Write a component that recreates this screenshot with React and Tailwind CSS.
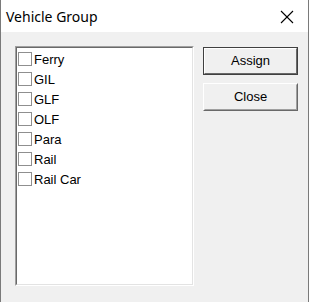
export default function App() {
    const items = ['Ferry', 'GIL', 'GLF', 'OLF', 'Para', 'Rail', 'Rail Car']

    return (
        <div className="w-[309px] h-[302px] flex flex-col bg-[#f0f0f0] border-l border-r border-[#7a7a7a]">
            {/* Title bar */}
            <div className="h-[32px] bg-white flex items-center justify-between pl-[5px] pr-[14px]">
                <span className="text-[14px] text-black" style={{ fontFamily: '"Noto Sans", sans-serif' }}>Vehicle Group</span>
                <svg width="14" height="14" viewBox="0 0 14 14" className="mt-[1px]">
                    <line x1="1" y1="1" x2="13" y2="13" stroke="#000" strokeWidth="1.1" />
                    <line x1="13" y1="1" x2="1" y2="13" stroke="#000" strokeWidth="1.1" />
                </svg>
            </div>

            {/* Body */}
            <div className="flex-1 flex pl-[14px] pt-[14px] gap-[9px]" style={{ fontFamily: '"Liberation Sans", Arial, sans-serif' }}>
                {/* List box */}
                <div className="w-[179px] h-[240px] border border-t-[#a0a0a0] border-l-[#a0a0a0] border-r-white border-b-white">
                    <div className="w-full h-full bg-white border border-t-[#696969] border-l-[#696969] border-r-[#e3e3e3] border-b-[#e3e3e3] pt-[1px] pl-[1px]">
                        {items.map((item) => (
                            <div key={item} className="h-[20px] flex items-center gap-[2px]">
                                <div className="w-[14px] h-[14px] bg-white border border-[#8f8f8f]" />
                                <span className="text-[13px] leading-none text-black">{item}</span>
                            </div>
                        ))}
                    </div>
                </div>

                {/* Buttons */}
                <div className="flex flex-col gap-[8px] pt-[1px]">
                    <button className="w-[95px] h-[28px] border border-[#404040] p-0">
                        <div className="w-full h-full border border-t-white border-l-white border-r-[#696969] border-b-[#696969] flex items-center justify-center text-[13px] text-black bg-[#f0f0f0]">
                            Assign
                        </div>
                    </button>
                    <button className="w-[95px] h-[28px] border border-t-white border-l-white border-r-[#696969] border-b-[#696969] p-0">
                        <div className="w-full h-full border border-t-[#f0f0f0] border-l-[#f0f0f0] border-r-[#a0a0a0] border-b-[#a0a0a0] flex items-center justify-center text-[13px] text-black bg-[#f0f0f0]">
                            Close
                        </div>
                    </button>
                </div>
            </div>
        </div>
    )
}
